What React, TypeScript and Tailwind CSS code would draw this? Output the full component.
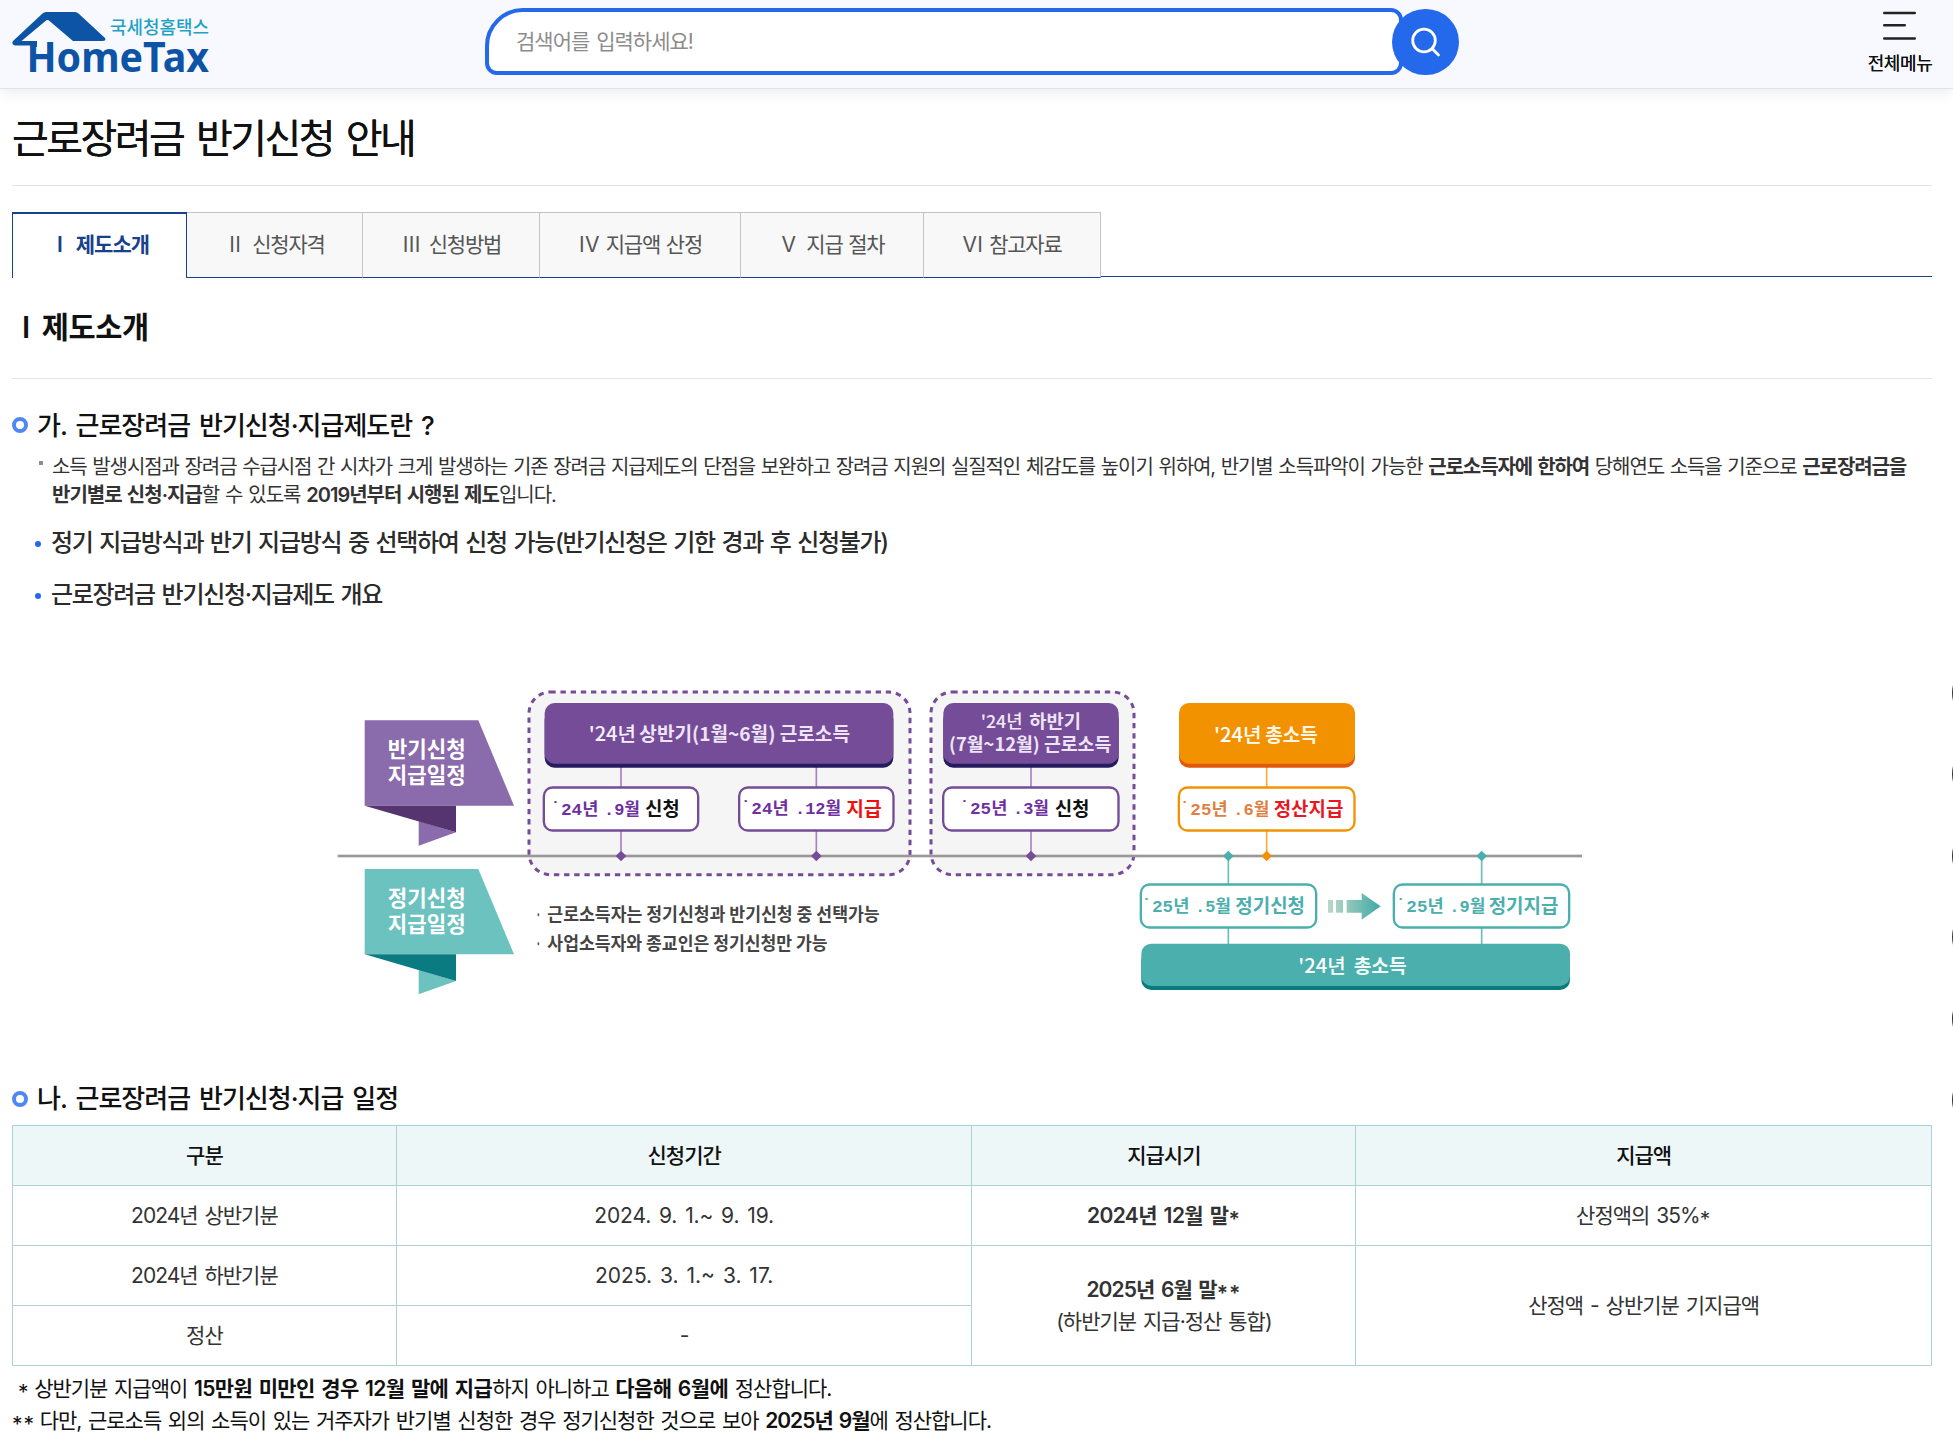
import type { ReactNode } from "react";

const Star = ({ n = 1 }: { n?: number }) => (
  <span className="align-[-4px] leading-none tracking-[1px]">{"*".repeat(n)}</span>
);

function Logo() {
  return (
    <svg width="204" height="66" viewBox="0 0 204 66" className="mt-[8px] block" aria-label="HomeTax">
      <path d="M34 4 H63 Q65 4 66.500 5.500 L93 30 Q94.500 33 91 33 H61 L37.500 13 Q35.500 11 33.500 13 L9.500 33 H25 V37.500 H3 Q-1 36.500 1 33 L30.500 5.500 Q32 4 34 4 Z" fill="#0d54a6" />
      <rect x="18.500" y="33" width="6.500" height="6" fill="#0d54a6" />
      <text x="98" y="25.500" fontSize="18.500" fontWeight="500" fill="#1fa3c4" textLength="99" lengthAdjust="spacingAndGlyphs" fontFamily="'Noto Sans CJK KR', sans-serif">국세청홈택스</text>
      <text x="14.500" y="63.500" fontSize="40.500" fontWeight="700" fill="#0d54a6" textLength="182.500" lengthAdjust="spacingAndGlyphs" fontFamily="'Noto Sans', sans-serif">HomeTax</text>
    </svg>
  );
}

function Header() {
  return (
    <header className="flex h-[89px] items-start border-b border-[#e0e2e8] bg-[#f8f9fe] pr-[21px] pl-3 shadow-[0_4px_14px_rgba(0,0,0,0.07)]">
      <div className="w-[473px]">
        <Logo />
      </div>
      <div className="mt-2 flex items-center">
        <div className="flex h-[67px] w-[918px] items-center rounded-tl-[38px] rounded-tr-[12px] rounded-br-[12px] rounded-bl-[12px] border-4 border-[#2468ec] bg-white pl-[27px] text-[21px] tracking-[-1px] text-[#8c8c8c] [word-spacing:2px]">
          <span>검색어를 입력하세요!</span>
        </div>
        <button className="-ml-[11px] flex h-[66px] w-[67px] items-center justify-center rounded-full bg-[#2468ec]">
          <svg width="32" height="32" viewBox="0 0 32 32" fill="none" stroke="#fff" strokeWidth="2.800" strokeLinecap="round">
            <circle cx="14" cy="14.500" r="11.300" />
            <path d="M22.500 23 L28.500 29" />
          </svg>
        </button>
      </div>
      <div className="ml-auto flex w-16 flex-col items-center">
        <svg width="33" height="30" viewBox="0 0 33 30" className="mt-[11px] mr-0.5" stroke="#222" strokeWidth="2.600" strokeLinecap="round">
          <path d="M1.300 2 H31.700 M1.300 14.300 H21.700 M1.300 27.500 H31.700" />
        </svg>
        <span className="mt-[10px] text-[18px] leading-[26px] tracking-[-0.4px] whitespace-nowrap text-[#111] [text-shadow:0_0_0.5px_#111]">전체메뉴</span>
      </div>
    </header>
  );
}

const tabs = [
  { num: "II", label: "신청자격", box: "w-[176px] pl-[5px]", gap: "gap-[11px]" },
  { num: "III", label: "신청방법", box: "w-[177px] pl-[2px]", gap: "gap-[8px]" },
  { num: "IV", label: "지급액 산정", box: "w-[201px] pl-[1px]", gap: "gap-[6px]" },
  { num: "V", label: "지급 절차", box: "w-[183px] pl-[2px]", gap: "gap-[10px]" },
  { num: "VI", label: "참고자료", box: "w-[177px]", gap: "gap-[6px]" },
];

function Tabs() {
  return (
    <nav className="mt-[26px] flex h-[66px] text-[21px] tracking-[-1.2px] [word-spacing:1px]">
      <div className="flex w-[175px] items-center justify-center gap-[14px] border-x border-t-2 border-[#17408d] bg-white pb-[2px] pl-[7px] font-semibold tracking-[-1px] text-[#17408d]">
        <span>I</span>
        <span>제도소개</span>
      </div>
      {tabs.map((t) => (
        <div key={t.num} className={`${t.box} ${t.gap} flex items-center justify-center border-t border-r border-b border-t-[#c4c4c4] border-r-[#c4c4c4] border-b-[#17408d] bg-[#f8f8f8] text-[#555]`}>
          <span className="tracking-[0.3px]">{t.num}</span>
          <span>{t.label}</span>
        </div>
      ))}
      <div className="h-[65px] flex-1 border-b border-[#17408d]" />
    </nav>
  );
}

function SectionTitle({ children, className }: { children: ReactNode; className: string }) {
  return (
    <h3 className={`${className} flex h-10 items-center gap-[9px] text-[26px] tracking-[-1px] text-[#111] [word-spacing:3px]`}>
      <span className="h-4 w-4 rounded-full border-[4.500px] border-[#5087f3]" />
      <span>{children}</span>
    </h3>
  );
}

function Bullet({ children }: { children: ReactNode }) {
  return (
    <li className="flex h-[52px] items-center gap-[10px] pl-[23px] text-[24px] font-medium tracking-[-1.3px] text-[#2b2b2b] [word-spacing:1.600px]">
      <span className="mt-1 h-[6px] w-[6px] rounded-full bg-[#2468ec]" />
      <span className="pt-0.5">{children}</span>
    </li>
  );
}

function T({ x, y, w, size, fill, weight = 500, font = "'Noto Sans CJK KR', sans-serif", children }: {
  x: number; y: number; w: number; size: number; fill: string; weight?: number; font?: string; children: string;
}) {
  return (
    <text x={x} y={y} fontSize={size} fill={fill} fontWeight={weight} fontFamily={font} textLength={w} lengthAdjust="spacingAndGlyphs">
      {children}
    </text>
  );
}

/* Year and month in a fixed-pitch face: the mark, the year, then the month ending at `end`. */
function DateLabel({ x, end, y, year, month, fill }: { x: number; end: number; y: number; year: string; month: string; fill: string }) {
  const mono = "'Liberation Mono', 'Noto Sans CJK KR', monospace";
  const monthWidth = 50 + (month.length - 2) * 30 + 28;
  return (
    <g>
      <T x={x - 10} y={y} w={28} size={54} fill={fill} weight={700} font={mono}>˙</T>
      <T x={x + 21} y={y} w={112} size={52} fill={fill} weight={700} font={mono}>{year}</T>
      <T x={end - monthWidth + 2} y={y} w={monthWidth} size={52} fill={fill} weight={700} font={mono}>{month}</T>
    </g>
  );
}

function Banner({ y, main, dark, top }: { y: number; main: string; dark: string; top: string }) {
  return (
    <g transform={`translate(0 ${y})`}>
      <path d="M134 151 H475 L582 407 H134 Z" fill={main} />
      <path d="M296 453 L408 487 L296 527 Z" fill={main} />
      <path d="M134 407 H408 V487 Z" fill={dark} />
      <T x={203} y={262} w={234} size={64} fill="#fff" weight={700}>{top}</T>
      <T x={203} y={339} w={234} size={64} fill="#fff" weight={700}>지급일정</T>
    </g>
  );
}

function Block({ x, w, y = 99, h = 194, fill, dark }: { x: number; w: number; y?: number; h?: number; fill: string; dark: string }) {
  return (
    <g>
      <rect x={x} y={y + 20} width={w} height={h - 20} rx="30" fill={dark} />
      <rect x={x} y={y} width={w} height={h - 12} rx="30" fill={fill} />
    </g>
  );
}

function Pill({ x, y = 349, w, stroke }: { x: number; y?: number; w: number; stroke: string }) {
  return <rect x={x + 3.5} y={y + 3.5} width={w - 7} height="129" rx="26" fill="#fff" stroke={stroke} strokeWidth="7" />;
}

function Diamond({ x, fill }: { x: number; fill: string }) {
  return <path d={`M${x} 542 L${x + 16} 558 L${x} 574 L${x - 16} 558 Z`} fill={fill} />;
}

function Schedule() {
  const purple = "#744c97";
  const teal = "#4aafad";
  return (
    <svg width="1280" height="340" viewBox="0 0 3840 1020" className="mt-[50px] ml-[308px] block">
      <defs>
        <linearGradient id="arrow" gradientUnits="userSpaceOnUse" x1="3024" x2="3182" y1="0" y2="0">
          <stop offset="0" stopColor="#b9d8c8" />
          <stop offset="0.4" stopColor="#8fc6b8" />
          <stop offset="1" stopColor="#3fa9aa" />
        </linearGradient>
      </defs>
      <Banner y={0} main="#8a6bac" dark="#553470" top="반기신청" />
      <Banner y={446} main="#6bc2be" dark="#0a7b80" top="정기신청" />

      <g fill="#f5f5f5" stroke={purple} strokeWidth="9" strokeDasharray="16 14.500">
        <rect x="627" y="66" width="1143" height="548" rx="64" />
        <rect x="1833" y="66" width="609" height="548" rx="64" />
      </g>
      <rect x="53" y="554" width="3733" height="8" fill="#999" />

      <g fill="#a684c2">
        <rect x="900.500" y="290" width="5" height="268" />
        <rect x="1486.500" y="290" width="5" height="268" />
        <rect x="2130.500" y="290" width="5" height="268" />
      </g>
      <rect x="2837.500" y="290" width="5" height="268" fill="#f6ab45" />
      <g fill="#6abfbd">
        <rect x="2722.500" y="558" width="5" height="270" />
        <rect x="3482.500" y="558" width="5" height="270" />
      </g>
      <Diamond x={903} fill={purple} />
      <Diamond x={1489} fill={purple} />
      <Diamond x={2133} fill={purple} />
      <Diamond x={2840} fill="#f39200" />
      <Diamond x={2725} fill={teal} />
      <Diamond x={3485} fill={teal} />

      <Block x={674} w={1046} fill={purple} dark="#241c5e" />
      <T x={806} y={213} w={142} size={58} fill="#f6f0fb">'24년</T>
      <T x={958} y={213} w={632} size={57} fill="#eee4f6" weight={700}>상반기(1월~6월) 근로소득</T>
      <Block x={1870} w={526} fill={purple} dark="#241c5e" />
      <T x={1982} y={174} w={126} size={53} fill="#f1e8f8">'24년</T>
      <T x={2128} y={174} w={155} size={53} fill="#eee4f6" weight={700}>하반기</T>
      <T x={1887} y={243} w={487} size={55} fill="#eee4f6" weight={700}>(7월~12월) 근로소득</T>
      <Block x={2577} w={528} fill="#f39200" dark="#e2570c" />
      <T x={2682} y={217} w={143} size={58} fill="#fff">'24년</T>
      <T x={2836} y={217} w={157} size={58} fill="#fff6e6" weight={700}>총소득</T>

      <Pill x={668} w={470} stroke={purple} />
      <DateLabel x={702} end={958} y={436} year="24년" month=".9월" fill="#7030a0" />
      <T x={976} y={438} w={103} size={57} fill="#111" weight={700}>신청</T>
      <Pill x={1254} w={470} stroke={purple} />
      <DateLabel x={1273} end={1561} y={432} year="24년" month=".12월" fill="#7030a0" />
      <T x={1579} y={438} w={106} size={57} fill="#f01010" weight={700}>지급</T>
      <Pill x={1866} w={533} stroke={purple} />
      <DateLabel x={1929} end={2185} y={432} year="25년" month=".3월" fill="#7030a0" />
      <T x={2205} y={438} w={103} size={57} fill="#111" weight={700}>신청</T>
      <Pill x={2573} w={534} stroke="#f39200" />
      <DateLabel x={2590} end={2846} y={436} year="25년" month=".6월" fill="#e07f42" />
      <T x={2861} y={438} w={209} size={57} fill="#ea1620" weight={700}>정산지급</T>

      <Pill x={2459} y={640} w={533} stroke={teal} />
      <DateLabel x={2475} end={2731} y={727} year="25년" month=".5월" fill={teal} />
      <T x={2746} y={730} w={209} size={57} fill={teal} weight={700}>정기신청</T>
      <g fill="url(#arrow)">
        <rect x="3024" y="690" width="15" height="38" />
        <rect x="3048" y="690" width="21" height="38" />
        <path d="M3080 690 H3125 V669 L3182 709 L3125 749 V728 H3080 Z" />
      </g>
      <Pill x={3218} y={640} w={533} stroke={teal} />
      <DateLabel x={3238} end={3494} y={727} year="25년" month=".9월" fill={teal} />
      <T x={3506} y={730} w={209} size={57} fill={teal} weight={700}>정기지급</T>
      <Block x={2464} w={1286} y={821} h={139} fill={teal} dark="#087b7f" />
      <T x={2935} y={908} w={142} size={58} fill="#fff">'24년</T>
      <T x={3101} y={908} w={159} size={58} fill="#f0fbfa" weight={700}>총소득</T>

      <T x={648} y={753} w={14} size={52} fill="#444" weight={700}>·</T>
      <T x={682} y={753} w={997} size={53} fill="#444" weight={700}>근로소득자는 정기신청과 반기신청 중 선택가능</T>
      <T x={648} y={841} w={14} size={52} fill="#444" weight={700}>·</T>
      <T x={682} y={841} w={841} size={53} fill="#444" weight={700}>사업소득자와 종교인은 정기신청만 가능</T>
    </svg>
  );
}

const td = "border border-[#aed2d4] pt-[2px] pb-0 text-center align-middle";

function ScheduleTable() {
  return (
    <table className="mt-[6px] w-full table-fixed border-collapse text-[21px] leading-[32px] tracking-[-1px] text-[#333] [word-spacing:2px]">
      <colgroup>
        <col className="w-[20%]" />
        <col className="w-[30%]" />
        <col className="w-[20%]" />
        <col className="w-[30%]" />
      </colgroup>
      <thead>
        <tr className="h-[60px] bg-[#eef7f7] text-[#111]">
          {["구분", "신청기간", "지급시기", "지급액"].map((h) => (
            <th key={h} className={`${td} font-medium`}>{h}</th>
          ))}
        </tr>
      </thead>
      <tbody>
        <tr className="h-[60px]">
          <td className={td}>2024년 상반기분</td>
          <td className={`${td} tracking-[-0.1px]`}>2024. 9. 1.~ 9. 19.</td>
          <td className={`${td} font-semibold tracking-[-0.6px]`}>2024년 12월 말<Star /></td>
          <td className={td}>산정액의 35%<Star /></td>
        </tr>
        <tr className="h-[60px]">
          <td className={td}>2024년 하반기분</td>
          <td className={`${td} tracking-normal`}>2025. 3. 1.~ 3. 17.</td>
          <td rowSpan={2} className={td}>
            <span className="font-semibold tracking-[-0.9px]">2025년 6월 말<Star n={2} /></span>
            <br />
            (하반기분 지급·정산 통합)
          </td>
          <td rowSpan={2} className={td}>산정액 - 상반기분 기지급액</td>
        </tr>
        <tr className="h-[60px]">
          <td className={td}>정산</td>
          <td className={td}>-</td>
        </tr>
      </tbody>
    </table>
  );
}

function EdgeDots() {
  return (
    <div className="absolute top-[660px] right-0 flex w-px flex-col gap-[15.400px] overflow-hidden">
      {[0, 1, 2, 3, 4, 5].map((i) => (
        <div key={i} className="h-[66px] w-[66px] rounded-full bg-[#2c3848]" />
      ))}
    </div>
  );
}

export default function App() {
  return (
    <div className="relative h-[1450px] overflow-hidden bg-white font-['Inter','Noto_Sans_CJK_KR',sans-serif]">
      <Header />
      <main className="pr-[21px] pl-3">
        <h1 className="flex h-[97px] items-center border-b border-[#e4e4e4] pt-[4px] text-[40px] tracking-[-2.550px] text-[#111] [text-shadow:0_0_0.6px_#111] [word-spacing:4px]">
          근로장려금 반기신청 안내
        </h1>
        <Tabs />
        <h2 className="flex h-[101px] items-center gap-[12px] border-b border-[#e4e4e4] pb-[2px] pl-[10px] text-[29.500px] font-semibold tracking-[-0.400px] text-[#111]">
          <span>I</span>
          <span>제도소개</span>
        </h2>
        <SectionTitle className="mt-[26px] font-medium">가. 근로장려금 반기신청·지급제도란 ?</SectionTitle>
        <div className="mt-[7px] flex pl-[27px] text-[20px] leading-[28.400px] tracking-[-1.100px] text-[#333] [word-spacing:1.200px]">
          <span className="mt-[9px] h-1 w-1 shrink-0 bg-[#8c8c8c]" />
          <p className="ml-[9px] pt-px whitespace-nowrap">
            소득 발생시점과 장려금 수급시점 간 시차가 크게 발생하는 기존 장려금 지급제도의 단점을 보완하고 장려금 지원의 실질적인 체감도를 높이기 위하여, 반기별 소득파악이 가능한{" "}
            <b className="font-semibold">근로소득자에 한하여</b> 당해연도 소득을 기준으로 <b className="font-semibold">근로장려금을</b>
            <br />
            <span className="tracking-[-1px]">
              <b className="font-semibold">반기별로 신청·지급</b>할 수 있도록 <b className="font-semibold">2019년부터 시행된 제도</b>입니다.
            </span>
          </p>
        </div>
        <ul className="mt-[6px]">
          <Bullet>정기 지급방식과 반기 지급방식 중 선택하여 신청 가능(반기신청은 기한 경과 후 신청불가)</Bullet>
          <Bullet>근로장려금 반기신청·지급제도 개요</Bullet>
        </ul>
        <Schedule />
        <SectionTitle className="mt-[69px] font-medium">나. 근로장려금 반기신청·지급 일정</SectionTitle>
        <ScheduleTable />
        <div className="mt-[7px] text-[21px] leading-[32.500px] tracking-[-1px] text-[#111] [word-spacing:2px]">
          <p className="pl-[6px] [word-spacing:1.700px]">
            <Star /><span className="-ml-[2px]"> 상반기분 지급액이 <b className="font-semibold tracking-[-0.600px]">15만원 미만인 경우 12월 말에 지급</b>하지 아니하고 <b className="font-semibold tracking-[-0.600px]">다음해 6월에</b> 정산합니다.</span>
          </p>
          <p className="[word-spacing:1.700px]">
            <Star n={2} /><span className="-ml-[2px]"> 다만, 근로소득 외의 소득이 있는 거주자가 반기별 신청한 경우 정기신청한 것으로 보아 <b className="font-semibold">2025년 9월</b>에 정산합니다.</span>
          </p>
        </div>
      </main>
      <EdgeDots />
    </div>
  );
}
